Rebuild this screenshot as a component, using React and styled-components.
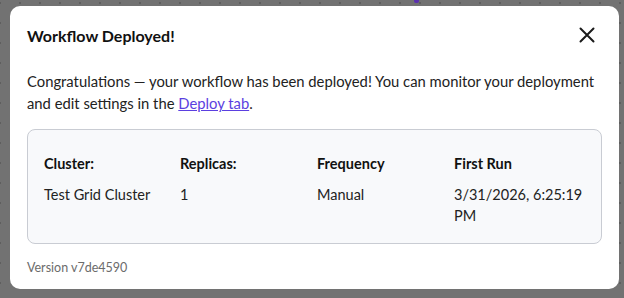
import React from 'react';
import styled, { createGlobalStyle } from 'styled-components';

const GlobalStyle = createGlobalStyle`
  html, body {
    margin: 0;
    padding: 0;
    background: #727272;
  }
  body {
    font-family: Lato, 'Noto Sans', sans-serif;
    -webkit-font-smoothing: antialiased;
  }
`;

const Backdrop = styled.div`
  position: relative;
  width: 624px;
  height: 298px;
  box-sizing: border-box;
  padding: 6px 5px 9px 10px;
  background: #727272;
  overflow: hidden;

  /* faint dotted ruler of the page underneath */
  background-image: radial-gradient(circle, #5f5f5f 0.8px, transparent 1.2px);
  background-size: 20px 20px;
  background-position: 10px 13px;
`;

const Marker = styled.span`
  position: absolute;
  top: 0;
  left: 414px;
  width: 5px;
  height: 3px;
  background: #5b2fb0;
  border-radius: 0 0 2px 2px;
`;

const Modal = styled.div`
  display: flex;
  flex-direction: column;
  height: 100%;
  box-sizing: border-box;
  background: #ffffff;
  border-radius: 10px;
  padding: 18px 17px 14px 17px;
  color: #1a1a1a;
`;

const Header = styled.div`
  display: flex;
  align-items: center;
  justify-content: space-between;
  height: 24px;
`;

const Title = styled.h2`
  margin: 0;
  font-size: 16px;
  font-weight: 700;
  color: #111;
`;

const CloseButton = styled.button`
  display: flex;
  align-items: center;
  justify-content: center;
  width: 16px;
  height: 16px;
  margin-right: 7px;
  padding: 0;
  border: 0;
  background: none;
  color: #1a1a1a;
  cursor: pointer;
`;

const Message = styled.p`
  margin: 24px 0 0 0;
  font-size: 14.8px;
  line-height: 22px;
  color: #222;
`;

const Link = styled.a`
  color: #5b3fe0;
  text-decoration: underline;
`;

const InfoCard = styled.div`
  margin-top: 15px;
  display: grid;
  grid-template-columns: 136px 137px 137px 1fr;
  row-gap: 10px;
  padding: 23px 16px 17px 16px;
  border: 1px solid #c9ccd3;
  border-radius: 8px;
  background: #f8f9fb;
`;

const Cell = styled.div`
  font-size: 14.5px;
  line-height: 21px;
  font-weight: ${({ $head }) => ($head ? 700 : 400)};
  color: ${({ $head }) => ($head ? '#111' : '#222')};
`;

const Version = styled.div`
  margin-top: 16px;
  font-size: 12.5px;
  line-height: 15px;
  color: #6b6b6b;
`;

const details = [
  { label: 'Cluster:', value: 'Test Grid Cluster' },
  { label: 'Replicas:', value: '1' },
  { label: 'Frequency', value: 'Manual' },
  { label: 'First Run', value: '3/31/2026, 6:25:19 PM' },
];

const App = () => (
  <>
    <GlobalStyle />
    <Backdrop>
      <Marker />
      <Modal>
        <Header>
          <Title>Workflow Deployed!</Title>
          <CloseButton aria-label="Close">
            <svg width="16" height="16" viewBox="0 0 16 16" fill="none">
              <path d="M1.5 1.5L14.5 14.5M14.5 1.5L1.5 14.5" stroke="currentColor" strokeWidth="2" strokeLinecap="round" />
            </svg>
          </CloseButton>
        </Header>

        <Message>
          Congratulations — your workflow has been deployed! You can monitor your deployment
          and edit settings in the <Link href="#">Deploy tab</Link>.
        </Message>

        <InfoCard>
          {details.map((d) => <Cell key={d.label} $head>{d.label}</Cell>)}
          {details.map((d) => <Cell key={d.value}>{d.value}</Cell>)}
        </InfoCard>

        <Version>Version v7de4590</Version>
      </Modal>
    </Backdrop>
  </>
);

export default App;
